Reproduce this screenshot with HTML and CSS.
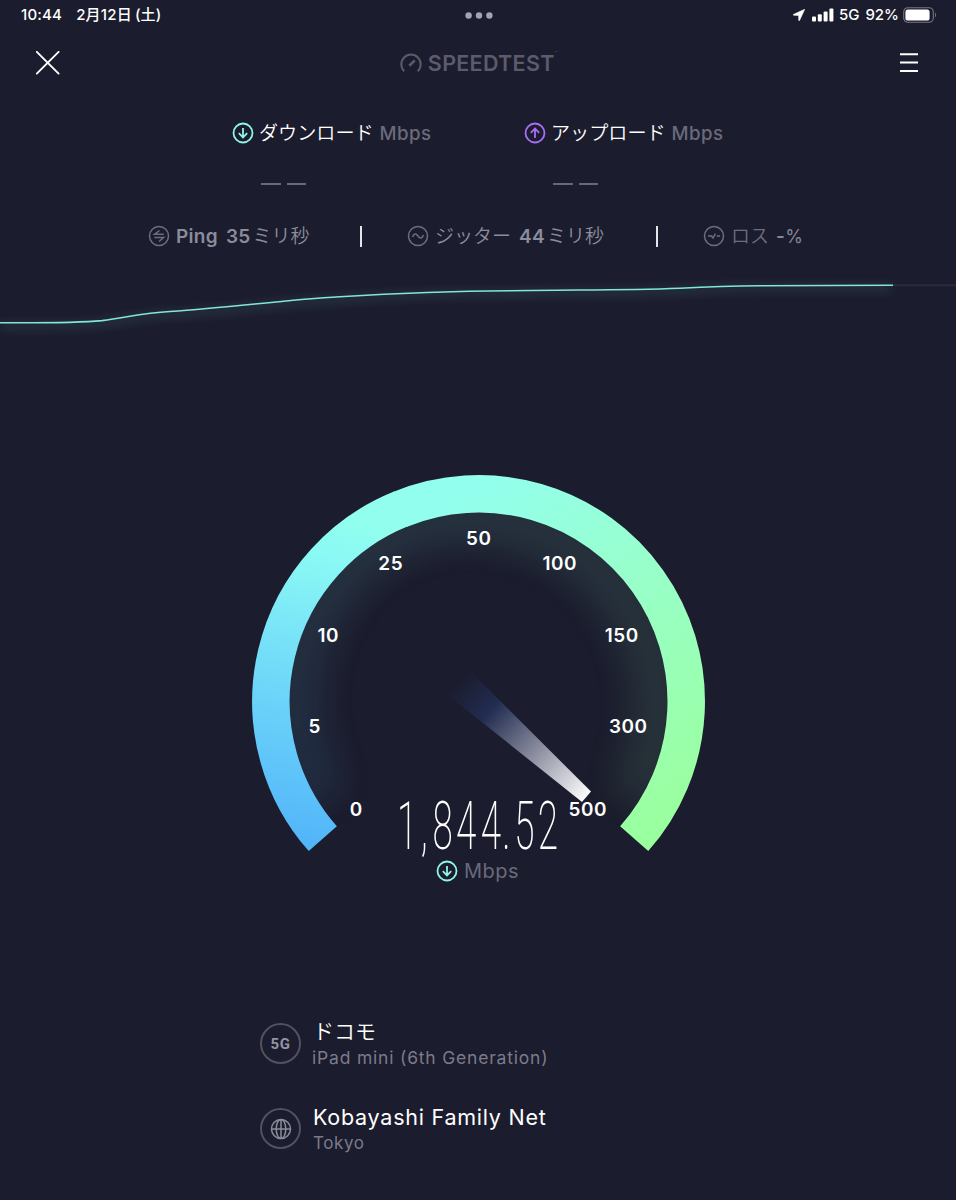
FILE: index.html
```html
<!DOCTYPE html>
<html lang="ja">
<head>
  <meta charset="UTF-8">
  <meta name="viewport" content="width=device-width, initial-scale=1.0">
  <title>Speedtest</title>
  <link rel="stylesheet" href="styles.css">
</head>
<body>

  <div class="status-bar">
    <div class="status-left">
      <span class="time">10:44</span>
      <span class="date">2月12日<span class="weekday">(土)</span></span>
    </div>
    <svg class="dots" width="28" height="8" viewBox="0 0 28 8">
      <circle cx="3.600" cy="4.500" r="3.200"/><circle cx="14" cy="4.500" r="3.200"/><circle cx="24.400" cy="4.500" r="3.200"/>
    </svg>
    <div class="status-right">
      <svg width="12" height="12" viewBox="0 0 12 12"><path d="M11.7 .3 L.3 5.5 Q0 6 .6 6.2 L5.6 6.4 L5.8 11.4 Q6 12 6.5 11.5 Z" fill="#fff" stroke="#fff" stroke-width=".6"/></svg>
      <svg class="signal" width="22" height="14" viewBox="0 0 22 14">
        <rect x="0" y="8.500" width="4" height="5" rx="1"/><rect x="5.800" y="6.300" width="4" height="7.200" rx="1"/><rect x="11.600" y="3.500" width="4" height="10" rx="1"/><rect x="17.400" y="0.500" width="4" height="13" rx="1"/>
      </svg>
      <span class="network">5G</span>
      <span class="battery-text">92%</span>
      <svg width="34" height="16" viewBox="0 0 34 16">
        <rect x=".7" y=".7" width="29.600" height="14.600" rx="4.300" fill="none" stroke="#777783" stroke-width="1.100"/>
        <rect x="2.400" y="2.400" width="24.200" height="11.200" rx="2.600" fill="#fff"/>
        <path d="M32 5.300 Q34 8 32 10.700 Z" fill="#777783"/>
      </svg>
    </div>
  </div>

  <div class="nav">
    <svg width="24" height="24" viewBox="0 0 24 24"><path d="M.8 .8 L22.6 22.6 M22.6 .8 L.8 22.6" stroke="#fff" stroke-width="1.9" stroke-linecap="round"/></svg>
    <div class="logo">
      <svg width="22" height="20" viewBox="0 0 22 20" fill="none" stroke="#5b5b6b" stroke-width="2">
        <path d="M4.200 18.200 A9.700 9.700 0 1 1 17.800 18.200"/>
        <path d="M9.300 12.700 L14.800 7.400" stroke-width="2.600"/>
      </svg>
      <span class="logo-text">SPEEDTEST</span><span class="tm">™</span>
    </div>
    <svg width="18" height="20" viewBox="0 0 18 20"><path d="M0 1.300 H18 M0 9.600 H18 M0 17.900 H18" stroke="#fff" stroke-width="2"/></svg>
  </div>

  <div class="results">
    <div class="result">
      <div class="result-label">
        <svg class="download" width="22" height="22" viewBox="0 0 22 22"><circle cx="11" cy="11" r="9.500"/><path d="M11 6 V15.200 M6.800 11.200 L11 15.400 L15.200 11.200"/></svg>
        <span class="result-name">ダウンロード</span>
        <span class="unit">Mbps</span>
      </div>
      <div class="dashes"><i></i><i></i></div>
    </div>
    <div class="result">
      <div class="result-label">
        <svg class="upload" width="22" height="22" viewBox="0 0 22 22"><circle cx="11" cy="11" r="9.500"/><path d="M11 16 V6.800 M6.800 10.800 L11 6.600 L15.200 10.800"/></svg>
        <span class="result-name">アップロード</span>
        <span class="unit">Mbps</span>
      </div>
      <div class="dashes"><i></i><i></i></div>
    </div>
  </div>

  <div class="stats">
    <div class="stat ping">
      <svg width="22" height="22" viewBox="0 0 22 22"><circle cx="11" cy="11" r="9.500"/><path d="M11.500 5.500 L6.500 9.300 H15.800 M6.300 12.600 H15.600 L11 16.500"/></svg>
      <b class="ping-name">Ping</b>
      <b>35</b><span class="ms">ミリ秒</span>
    </div>
    <div class="divider"></div>
    <div class="stat jitter">
      <svg width="22" height="22" viewBox="0 0 22 22"><circle cx="11" cy="11" r="9.500"/><path d="M5.500 12 C7 8.200 9 8.200 11 11 S15 13.800 16.500 10"/></svg>
      <span class="jitter-name">ジッター</span>
      <b>44</b><span class="ms">ミリ秒</span>
    </div>
    <div class="divider"></div>
    <div class="stat loss">
      <svg width="22" height="22" viewBox="0 0 22 22"><circle cx="11" cy="11" r="9.500"/><path d="M5 11 H8.500 L10 13 L12.500 8.700 M13.700 11 H17"/></svg>
      <span class="loss-name">ロス</span>
      <b>-</b><span class="percent">%</span>
    </div>
  </div>

  <svg class="chart" width="956" height="70" viewBox="0 270 956 70">
    <defs>
      <filter id="chart-blur" x="-5%" y="-50%" width="110%" height="220%"><feGaussianBlur stdDeviation="5"/></filter>
    </defs>
    <path d="M892 285.300 H956" stroke="#2b2b3a" stroke-width="2"/>
    <path class="chart-glow" filter="url(#chart-blur)" d="M0 326 C50 326 80 326 105 323 C130 320 145 314 175 314.500 C235 310 290 302 340 299.500 C400 295 460 293 510 293 C570 292 620 294 680 291 C720 288 740 288 760 288 L892 288"/>
    <path class="chart-line" d="M0 322.800 C40 322.800 75 323.200 102 320.600 C127 317.500 142 313 170 311.500 C235 307 285 299.800 340 296.700 C400 293 460 291 510 290.700 C570 289.500 620 290.500 680 288.200 C710 286.500 730 285.800 760 285.700 L893 285.300"/>
  </svg>

  <div class="gauge">
    <svg class="gauge-dial" width="480" height="400" viewBox="240 460 480 400">
      <defs>
        <linearGradient id="arc-left" gradientUnits="userSpaceOnUse" x1="320" y1="850" x2="400" y2="490">
          <stop offset="0" stop-color="#52b4f9"/>
          <stop offset=".4" stop-color="#6dd6f9"/>
          <stop offset=".78" stop-color="#8bf9f5"/>
          <stop offset=".9" stop-color="#92ffee"/>
        </linearGradient>
        <linearGradient id="arc-right" gradientUnits="userSpaceOnUse" x1="400" y1="490" x2="640" y2="840">
          <stop offset=".09" stop-color="#92ffee"/>
          <stop offset=".5" stop-color="#98ffc9"/>
          <stop offset="1" stop-color="#9aff9e"/>
        </linearGradient>
        <linearGradient id="needle" gradientUnits="userSpaceOnUse" x1="456" y1="681" x2="588" y2="798">
          <stop offset="0" stop-color="#202b50" stop-opacity="0"/>
          <stop offset=".26" stop-color="#222d52"/>
          <stop offset=".6" stop-color="#898b9d"/>
          <stop offset="1" stop-color="#fff"/>
        </linearGradient>
        <clipPath id="dial"><circle cx="478.500" cy="701.500" r="189"/></clipPath>
        <filter id="dial-blur" x="-20%" y="-20%" width="140%" height="140%"><feGaussianBlur stdDeviation="18"/></filter>
      </defs>
      <g clip-path="url(#dial)">
        <g fill="none" stroke-width="54" opacity=".1" filter="url(#dial-blur)">
          <path d="M324 800 A190 190 0 0 1 401 528" stroke="url(#arc-left)"/>
          <path d="M401 528 A190 190 0 0 1 633 800" stroke="url(#arc-right)"/>
        </g>
      </g>
      <path d="M322.800 838.700 A207.500 207.500 0 0 1 401 508.900" fill="none" stroke="url(#arc-left)" stroke-width="37.500"/>
      <path d="M400 509.300 A207.500 207.500 0 0 1 634.200 838.700" fill="none" stroke="url(#arc-right)" stroke-width="37.500"/>
      <path d="M449 696 L471 672 L591 791.500 L582 802 Z" fill="url(#needle)"/>
      <g class="ticks">
        <text x="356.300" y="816.300">0</text>
        <text x="314.800" y="733">5</text>
        <text x="328.300" y="642">10</text>
        <text x="390.800" y="570">25</text>
        <text x="478.800" y="545">50</text>
        <text x="559.800" y="570">100</text>
        <text x="621.800" y="642">150</text>
        <text x="628.300" y="733">300</text>
        <text x="587.800" y="816.300">500</text>
      </g>
      <text class="speed" transform="translate(397 848.500) scale(.55 1)" x="0 43 64.500 107.500 152.500 191.500 213 256">1,844.52</text>
    </svg>
    <div class="gauge-unit">
      <svg class="download" width="22" height="22" viewBox="0 0 22 22"><circle cx="11" cy="11" r="9.500"/><path d="M11 6 V15.200 M6.800 11.200 L11 15.400 L15.200 11.200"/></svg>
      <span>Mbps</span>
    </div>
  </div>

  <div class="connection">
    <div class="row">
      <div class="round network-type">5G</div>
      <div>
        <div class="title carrier">ドコモ</div>
        <div class="sub device">iPad mini (6th Generation)</div>
      </div>
    </div>
    <div class="row">
      <div class="round">
        <svg width="22" height="22" viewBox="0 0 22 22" fill="none" stroke="#8c8c9b" stroke-width="1.500"><circle cx="11" cy="11" r="9.500"/><ellipse cx="11" cy="11" rx="4.800" ry="9.500"/><path d="M11 1.500 V20.500 M1.500 11 H20.500"/></svg>
      </div>
      <div>
        <div class="title server">Kobayashi Family Net</div>
        <div class="sub city">Tokyo</div>
      </div>
    </div>
  </div>

</body>
</html>
```
FILE: styles.css
```css
* {
  box-sizing: border-box;
  margin: 0;
  padding: 0;
}

body {
  height: 1200px;
  overflow: hidden;
  background: #1b1c2d;
  color: #fff;
  font-family: Inter, "Noto Sans CJK JP", sans-serif;
}

svg {
  display: block;
  flex: none;
}

.status-bar {
  display: grid;
  grid-template-columns: 1fr 28px 1fr;
  align-items: center;
  height: 30px;
  padding: 0 19px 0 21px;
  font-size: 15px;
  font-weight: 450;
  line-height: 30px;
}

.status-left,
.status-right {
  display: flex;
  align-items: center;
  white-space: nowrap;
}

.status-left {
  gap: 14px;
  letter-spacing: .2px;
}

.status-right {
  justify-content: flex-end;
}

.weekday {
  margin-left: 3px;
}

.dots {
  fill: #a3a3b3;
}

.signal {
  margin: 0 5px 0 7px;
  fill: #fff;
}

.network {
  margin-right: 6px;
}

.battery-text {
  margin-right: 4px;
}

.nav {
  display: flex;
  align-items: center;
  justify-content: space-between;
  height: 65px;
  padding: 0 38px 0 36px;
}

.logo {
  display: flex;
  align-items: center;
  margin-right: 3px;
  color: #5b5b6b;
}

.logo-text {
  margin-left: 6px;
  font-size: 21.5px;
  font-weight: 600;
  letter-spacing: .3px;
}

.tm {
  align-self: flex-start;
  font-size: 4px;
}

.results {
  display: flex;
  padding: 24px 0 0 232px;
}

.result {
  width: 292px;
}

.result-label {
  display: flex;
  align-items: center;
  height: 28px;
  white-space: nowrap;
}

.download,
.upload {
  fill: none;
  stroke: #8ff5e5;
  stroke-width: 1.8;
}

.upload {
  stroke: #a96ef5;
}

.result-name {
  margin-left: 5px;
  font-size: 19.1px;
  font-weight: 350;
  line-height: 28px;
}

.unit {
  margin-left: 6px;
  color: #6a6a7b;
  font-size: 18.7px;
  font-weight: 500;
  letter-spacing: .4px;
}

.dashes {
  display: flex;
  gap: 6px;
  padding: 36px 0 0 29px;
}

.dashes i {
  width: 19.5px;
  height: 2px;
  background: #686978;
}

.stats {
  display: flex;
  align-items: center;
  height: 30px;
  margin-top: 36px;
  padding-left: 148px;
  color: #8b8c9c;
  font-size: 19px;
  line-height: 28px;
  white-space: nowrap;
}

.stat {
  display: flex;
  align-items: center;
}

.stat > b,
.stat > span {
  padding-top: 1px;
}

.stat svg {
  fill: none;
  stroke: #6d6d7e;
  stroke-width: 1.5;
}

.stat b {
  font-weight: 600;
  letter-spacing: .3px;
}

.ping {
  width: 212px;
}

.ping-name {
  margin: 0 8px 0 6px;
}

.jitter {
  width: 249px;
}

.jitter-name {
  margin: 0 8px 0 6px;
  font-weight: 350;
}

.ms {
  margin-left: 2px;
  font-weight: 350;
}

.divider {
  width: 2px;
  height: 21px;
  background: #e4e4ea;
}

.ping + .divider {
  margin-right: 45px;
}

.jitter + .divider {
  margin-right: 45px;
}

.loss {
  color: #6d6d7e;
}

.loss-name {
  margin: 0 7px 0 6px;
  font-weight: 350;
}

.loss b,
.percent {
  color: #858696;
}

.percent {
  font-size: 18px;
}

.chart {
  margin-top: 19px;
}

.chart-line,
.chart-glow {
  fill: none;
  stroke: #82e6da;
  stroke-width: 1.6;
}

.chart-glow {
  stroke-width: 9;
  opacity: .09;
}

.gauge {
  width: 480px;
  margin: 120px 0 0 240px;
}

.gauge-dial {
  overflow: visible;
}

.ticks {
  fill: #fff;
  font-size: 18.9px;
  font-weight: 600;
  letter-spacing: .6px;
  text-anchor: middle;
}

.speed {
  fill: #fff;
  font-family: Roboto, sans-serif;
  font-size: 67px;
  font-weight: 200;
}

.gauge-unit {
  display: flex;
  align-items: center;
  height: 22px;
  margin-left: 196px;
  color: #6a6a7b;
  font-size: 20px;
  letter-spacing: .5px;
}

.gauge-unit span {
  margin-left: 6px;
}

.connection {
  padding: 134px 0 0 260px;
}

.row {
  display: flex;
  height: 85px;
}

.round {
  display: flex;
  align-items: center;
  justify-content: center;
  width: 41px;
  height: 41px;
  margin: 7px 12px 0 0;
  border: 2px solid #515161;
  border-radius: 50%;
}

.network-type {
  color: #9394a2;
  font-family: Roboto, sans-serif;
  font-size: 15px;
  font-weight: 700;
  letter-spacing: .6px;
}

.title {
  height: 30px;
  padding-top: 1px;
  font-size: 21px;
  line-height: 30px;
  white-space: nowrap;
}

.carrier {
  font-weight: 350;
}

.server {
  font-size: 21.5px;
  letter-spacing: .75px;
}

.sub {
  padding-top: 1px;
  color: #7b7b8c;
  font-size: 17px;
  line-height: 22px;
  white-space: nowrap;
}

.device {
  margin-left: -1px;
  font-size: 17.5px;
  letter-spacing: .8px;
}

.city {
  letter-spacing: .6px;
}
```
